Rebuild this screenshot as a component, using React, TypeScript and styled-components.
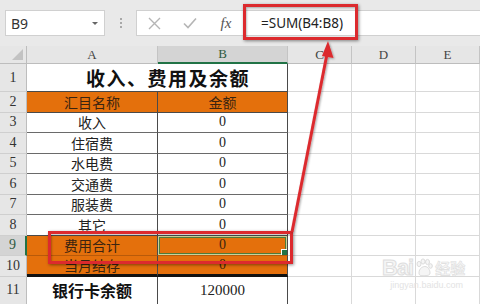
import { Fragment } from 'react'
import styled, { createGlobalStyle } from 'styled-components'

const GlobalStyle = createGlobalStyle`
  html, body {
    margin: 0;
    padding: 0;
    background: #ffffff;
  }
  body {
    font-family: "Liberation Serif", "Noto Sans CJK SC", serif;
  }
`

const Page = styled.div`
  position: relative;
  width: 480px;
  height: 304px;
  overflow: hidden;
  background: #fff;
`

const Toolbar = styled.div`
  height: 46px;
  background: #e9e9e9;
  display: flex;
  align-items: center;
  padding: 0 0 0 5px;
  box-sizing: border-box;
`

const NameBox = styled.div`
  width: 100px;
  height: 26px;
  background: #fff;
  border: 1px solid #d0d0d0;
  box-sizing: border-box;
  display: flex;
  align-items: center;
  justify-content: space-between;
  padding: 0 6px 0 5px;
  font-family: "Noto Sans", "Liberation Sans", sans-serif;
  font-size: 14px;
  color: #333;
`

const Caret = styled.span`
  width: 0;
  height: 0;
  border-left: 3px solid transparent;
  border-right: 3px solid transparent;
  border-top: 3px solid #666;
`

const Grip = styled.div`
  width: 31px;
  display: flex;
  flex-direction: column;
  align-items: center;
  gap: 2px;
  span {
    width: 2px;
    height: 2px;
    background: #a8a8a8;
  }
`

const FormulaBar = styled.div`
  flex: 1;
  height: 26px;
  background: #fff;
  border: 1px solid #d0d0d0;
  border-right: none;
  box-sizing: border-box;
  display: flex;
  align-items: center;
`

const ToolIcon = styled.span<{ $w: number }>`
  width: ${p => p.$w}px;
  display: flex;
  align-items: center;
  justify-content: center;
`

const Fx = styled.span`
  font-family: "Liberation Serif", serif;
  font-style: italic;
  font-size: 15px;
  color: #555;
`

const FormulaText = styled.div`
  margin-left: 18px;
  font-family: "Noto Sans", "Liberation Sans", sans-serif;
  font-size: 13.5px;
  color: #222;
`

const Sheet = styled.div`
  display: grid;
  grid-template-columns: 27px 131px 130px 64px 64px 64px;
  grid-template-rows: 18px 28px repeat(9, 20.5px) 28px;
`

const Cell = styled.div<{
  $bg?: string
  $right?: string
  $bottom?: string
  $bw?: number
  $bold?: boolean
  $size?: number
  $span?: number
  $color?: string
}>`
  grid-column: span ${p => p.$span || 1};
  background: ${p => p.$bg || '#fff'};
  border-right: 1px solid ${p => p.$right || '#d9d9d9'};
  border-bottom: ${p => p.$bw || 1}px solid ${p => p.$bottom || '#d9d9d9'};
  box-sizing: border-box;
  display: flex;
  align-items: center;
  justify-content: center;
  font-size: ${p => p.$size || 14}px;
  font-weight: ${p => (p.$bold ? 700 : 400)};
  color: ${p => p.$color || '#222'};
  white-space: nowrap;
  overflow: hidden;
  position: relative;
`

const Title = styled(Cell)`
  letter-spacing: 1.5px;
  padding-left: 22px;
`

const Corner = styled(Cell)`
  background: #e6e6e6;
  border-right: 1px solid #bdbdbd;
  border-bottom: 1px solid #bdbdbd;
  &::after {
    content: '';
    position: absolute;
    right: 3px;
    bottom: 3px;
    width: 0;
    height: 0;
    border-left: 11px solid transparent;
    border-bottom: 11px solid #c2c2c2;
  }
`

const ColHead = styled(Cell)<{ $sel?: boolean }>`
  background: ${p => (p.$sel ? '#d4d4d4' : '#e6e6e6')};
  border-right: 1px solid #c4c4c4;
  border-bottom: ${p => (p.$sel ? '2px solid #217346' : '1px solid #bdbdbd')};
  color: ${p => (p.$sel ? '#2d5a3e' : '#444')};
  font-size: 13px;
`

const RowHead = styled(Cell)<{ $sel?: boolean }>`
  background: ${p => (p.$sel ? '#d4d4d4' : '#e6e6e6')};
  border-right: ${p => (p.$sel ? '2px solid #217346' : '1px solid #bdbdbd')};
  border-bottom: 1px solid #cfcfcf;
  color: ${p => (p.$sel ? '#2d5a3e' : '#333')};
  font-size: 14px;
`

const Selected = styled(Cell)`
  &::before {
    content: '';
    position: absolute;
    inset: 0 0 0 0;
    border: 1.5px solid #c9d29a;
    box-shadow: inset 0 0 0 1px #4f7a3a;
  }
  &::after {
    content: '';
    position: absolute;
    right: -1px;
    bottom: -1px;
    width: 5px;
    height: 5px;
    background: #217346;
    border: 1px solid #fff;
  }
`

const Highlight = styled.div<{ $x: number; $y: number; $w: number; $h: number }>`
  position: absolute;
  left: ${p => p.$x}px;
  top: ${p => p.$y}px;
  width: ${p => p.$w}px;
  height: ${p => p.$h}px;
  border: 3px solid #dc2a2e;
  box-sizing: border-box;
  box-shadow: 1px 1px 3px rgba(0, 0, 0, 0.45), inset 1px 1px 2px rgba(0, 0, 0, 0.25);
  pointer-events: none;
`

const Overlay = styled.svg`
  position: absolute;
  left: 0;
  top: 0;
  pointer-events: none;
`

const Watermark = styled.div`
  position: absolute;
  left: 382px;
  top: 256px;
  display: flex;
  flex-direction: column;
  align-items: center;
  pointer-events: none;
`

const WmLogo = styled.div`
  display: flex;
  align-items: center;
  gap: 1px;
  font-family: "Liberation Sans", sans-serif;
  font-weight: 700;
  font-size: 22px;
  letter-spacing: -1px;
  line-height: 24px;
  -webkit-text-stroke: 1px #dedede;
  color: #f5f5f5;
`

const WmCn = styled.span`
  font-size: 15px;
  font-family: "Noto Sans CJK SC", sans-serif;
  letter-spacing: 0;
  -webkit-text-stroke: 0.6px #dedede;
`

const WmUrl = styled.div`
  font-family: "Liberation Sans", sans-serif;
  font-size: 9px;
  color: #e3e3e3;
  margin-left: 6px;
`

const ORANGE = '#e4700c'
const DARK = '#4a4a4a'
const INK = '#3b2410'

const rows = [
  { n: 3, name: '收入' },
  { n: 4, name: '住宿费' },
  { n: 5, name: '水电费' },
  { n: 6, name: '交通费' },
  { n: 7, name: '服装费' },
  { n: 8, name: '其它' },
]

const Blank = () => (
  <>
    <Cell />
    <Cell />
    <Cell />
  </>
)

const Paw = () => (
  <svg width="20" height="20" viewBox="0 0 20 20">
    <g fill="#f5f5f5" stroke="#dcdcdc" strokeWidth="1">
      <ellipse cx="5" cy="6" rx="2" ry="2.6" />
      <ellipse cx="9" cy="3.5" rx="2" ry="2.6" />
      <ellipse cx="13.5" cy="4" rx="2" ry="2.6" />
      <ellipse cx="16.5" cy="8" rx="1.8" ry="2.3" />
      <path d="M5 15 C5 10 9 8.5 11 8.5 C14 8.5 16 12 16 15 C16 18 12 17.5 10.5 17.5 C8.5 17.5 5 18.5 5 15 Z" />
    </g>
  </svg>
)

export default function App() {
  return (
    <Page>
      <GlobalStyle />
      <Toolbar>
        <NameBox>
          B9
          <Caret />
        </NameBox>
        <Grip>
          <span />
          <span />
          <span />
        </Grip>
        <FormulaBar>
          <ToolIcon $w={34}>
            <svg width="13" height="13" viewBox="0 0 13 13">
              <path d="M1 1 L12 12 M12 1 L1 12" stroke="#b5b5b5" strokeWidth="1.4" />
            </svg>
          </ToolIcon>
          <ToolIcon $w={38}>
            <svg width="14" height="12" viewBox="0 0 14 12">
              <path d="M1 6.5 L5 10.5 L13 1.5" stroke="#b5b5b5" strokeWidth="1.6" fill="none" />
            </svg>
          </ToolIcon>
          <ToolIcon $w={34}>
            <Fx>fx</Fx>
          </ToolIcon>
          <FormulaText>=SUM(B4:B8)</FormulaText>
        </FormulaBar>
      </Toolbar>

      <Sheet>
        <Corner />
        <ColHead>A</ColHead>
        <ColHead $sel>B</ColHead>
        <ColHead>C</ColHead>
        <ColHead>D</ColHead>
        <ColHead>E</ColHead>

        <RowHead>1</RowHead>
        <Title $span={2} $bold $size={19} $right={DARK} $bottom={DARK} $color="#111">
          收入、费用及余额
        </Title>
        <Blank />

        <RowHead>2</RowHead>
        <Cell $bg={ORANGE} $right={DARK} $bottom={DARK} $color={INK}>汇目名称</Cell>
        <Cell $bg={ORANGE} $right={DARK} $bottom={DARK} $color={INK}>金额</Cell>
        <Blank />

        {rows.map(r => (
          <Fragment key={r.n}>
            <RowHead>{r.n}</RowHead>
            <Cell $right={DARK} $bottom={r.n === 8 ? DARK : '#6a6a6a'}>{r.name}</Cell>
            <Cell $right={DARK} $bottom={r.n === 8 ? DARK : '#6a6a6a'}>0</Cell>
            <Blank />
          </Fragment>
        ))}

        <RowHead $sel>9</RowHead>
        <Cell $bg={ORANGE} $right={DARK} $bottom="#b85a0a" $color={INK}>费用合计</Cell>
        <Selected $bg={ORANGE} $right={DARK} $bottom="#b85a0a" $color={INK}>0</Selected>
        <Blank />

        <RowHead>10</RowHead>
        <Cell $bg={ORANGE} $right={DARK} $bottom="#111" $bw={3} $color={INK}>当月结存</Cell>
        <Cell $bg={ORANGE} $right={DARK} $bottom="#111" $bw={3} $color={INK}>0</Cell>
        <Blank />

        <RowHead>11</RowHead>
        <Cell $right={DARK} $bold $size={16} $color="#111">银行卡余额</Cell>
        <Cell $right={DARK} $size={15}>120000</Cell>
        <Blank />
      </Sheet>

      <Watermark>
        <WmLogo>
          Bai
          <Paw />
          <WmCn>经验</WmCn>
        </WmLogo>
        <WmUrl>jingyan.baidu.com</WmUrl>
      </Watermark>

      <Highlight $x={243} $y={4} $w={115} $h={36} />
      <Highlight $x={48} $y={231} $w={245} $h={33} />

      <Overlay width="480" height="304" viewBox="0 0 480 304">
        <defs>
          <filter id="sh" x="-20%" y="-20%" width="140%" height="140%">
            <feDropShadow dx="1" dy="1" stdDeviation="1" floodColor="#000" floodOpacity="0.35" />
          </filter>
        </defs>
        <g filter="url(#sh)">
          <line x1="292" y1="232" x2="327" y2="54" stroke="#dc2a2e" strokeWidth="3" />
          <path d="M328 41 L333.5 58 L322 56 Z" fill="#dc2a2e" />
        </g>
      </Overlay>
    </Page>
  )
}
